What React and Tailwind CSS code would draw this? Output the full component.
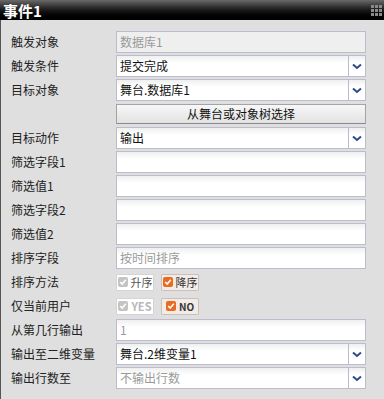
import React from 'react';

const font = { fontFamily: '"Noto Sans CJK SC", "Liberation Sans", sans-serif' };

const Chevron = () => (
  <svg width="10" height="7" viewBox="0 0 10 7">
    <path d="M1 1.5 L5 5 L9 1.5" fill="none" stroke="#2f4a86" strokeWidth="2" />
  </svg>
);

const Check = ({ on }) => (
  <span className={`w-[10px] h-[10px] rounded-[2px] flex items-center justify-center ${on ? 'bg-[#ea6a1f]' : 'bg-[#c4c4c4]'}`}>
    <svg width="8" height="8" viewBox="0 0 8 8">
      <path d="M1.2 4 L3.2 6 L6.8 1.8" fill="none" stroke="#fff" strokeWidth="1.6" />
    </svg>
  </span>
);

const TextBox = ({ value, placeholder, disabled }) => (
  <div
    className={`w-[250px] h-[22px] border border-[#bcbccc] flex items-center px-[3px] text-[12px] ${
      disabled ? 'bg-[#efefef]' : 'bg-linear-to-b from-[#eef0f0] to-white to-[35%]'
    }`}
  >
    {value ? <span className="text-[#111]">{value}</span> : <span className="text-[#9a9a9a]">{placeholder}</span>}
  </div>
);

const Select = ({ value, placeholder }) => (
  <div className="w-[250px] h-[22px] border border-[#bcbccc] flex bg-linear-to-b from-[#eef0f0] to-white to-[35%] text-[12px]">
    <div className="flex-1 flex items-center px-[3px]">
      {value ? <span className="text-[#111]">{value}</span> : <span className="text-[#9a9a9a]">{placeholder}</span>}
    </div>
    <div className="w-[17px] border-l border-[#bcbccc] flex items-center justify-center">
      <Chevron />
    </div>
  </div>
);

const Toggle = ({ label, on, dim }) => (
  <div
    className={`h-[17px] w-[38px] border flex items-center justify-center gap-[3px] text-[11px] rounded-[1px] ${
      on ? 'bg-[#f2ebe7] border-[#cbbfb9] text-[#333]' : 'bg-white border-[#d4d4d4] text-[#555]'
    } ${dim ? 'text-[#b8b8b8] font-bold' : ''}`}
  >
    <Check on={on} />
    <span className={label === 'NO' ? 'font-bold text-[10px]' : ''}>{label}</span>
  </div>
);

const Row = ({ label, children }) => (
  <div className="h-[24px] flex items-center">
    <div className="w-[115px] shrink-0 pl-[10px] text-[12px] text-[#222]">{label}</div>
    <div className="flex gap-[7px]">{children}</div>
  </div>
);

export default function App() {
  return (
    <div className="w-[384px] h-[399px] bg-[#dfdfdf] flex flex-col" style={font}>
      <div className="h-[20px] bg-linear-to-b from-[#6a6a6a] via-[#1a1a1a] to-black flex items-center justify-between pl-[3px] pr-[2px]">
        <span className="text-white font-bold text-[15px] leading-none">事件1</span>
        <div className="grid grid-cols-3 gap-[1px]">
          {Array.from({ length: 9 }).map((_, i) => (
            <span key={i} className="w-[3px] h-[3px] bg-[#8a8a8a]" />
          ))}
        </div>
      </div>
      <div className="flex-1 border-l border-[#555] pt-[10px]">
        <Row label="触发对象"><TextBox placeholder="数据库1" disabled /></Row>
        <Row label="触发条件"><Select value="提交完成" /></Row>
        <Row label="目标对象"><Select value="舞台.数据库1" /></Row>
        <Row label="">
          <button className="w-[250px] h-[20px] border border-[#a4a4a4] border-b-[#8a8a8a] bg-linear-to-b from-[#f7f7f7] to-[#e2e2e2] text-[12px] text-[#111] flex items-center justify-center">
            从舞台或对象树选择
          </button>
        </Row>
        <Row label="目标动作"><Select value="输出" /></Row>
        <Row label="筛选字段1"><TextBox /></Row>
        <Row label="筛选值1"><TextBox /></Row>
        <Row label="筛选字段2"><TextBox /></Row>
        <Row label="筛选值2"><TextBox /></Row>
        <Row label="排序字段"><TextBox placeholder="按时间排序" /></Row>
        <Row label="排序方法">
          <Toggle label="升序" />
          <Toggle label="降序" on />
        </Row>
        <Row label="仅当前用户">
          <Toggle label="YES" dim />
          <Toggle label="NO" on />
        </Row>
        <Row label="从第几行输出"><TextBox placeholder="1" /></Row>
        <Row label="输出至二维变量"><Select value="舞台.2维变量1" /></Row>
        <Row label="输出行数至"><Select placeholder="不输出行数" /></Row>
      </div>
    </div>
  );
}
